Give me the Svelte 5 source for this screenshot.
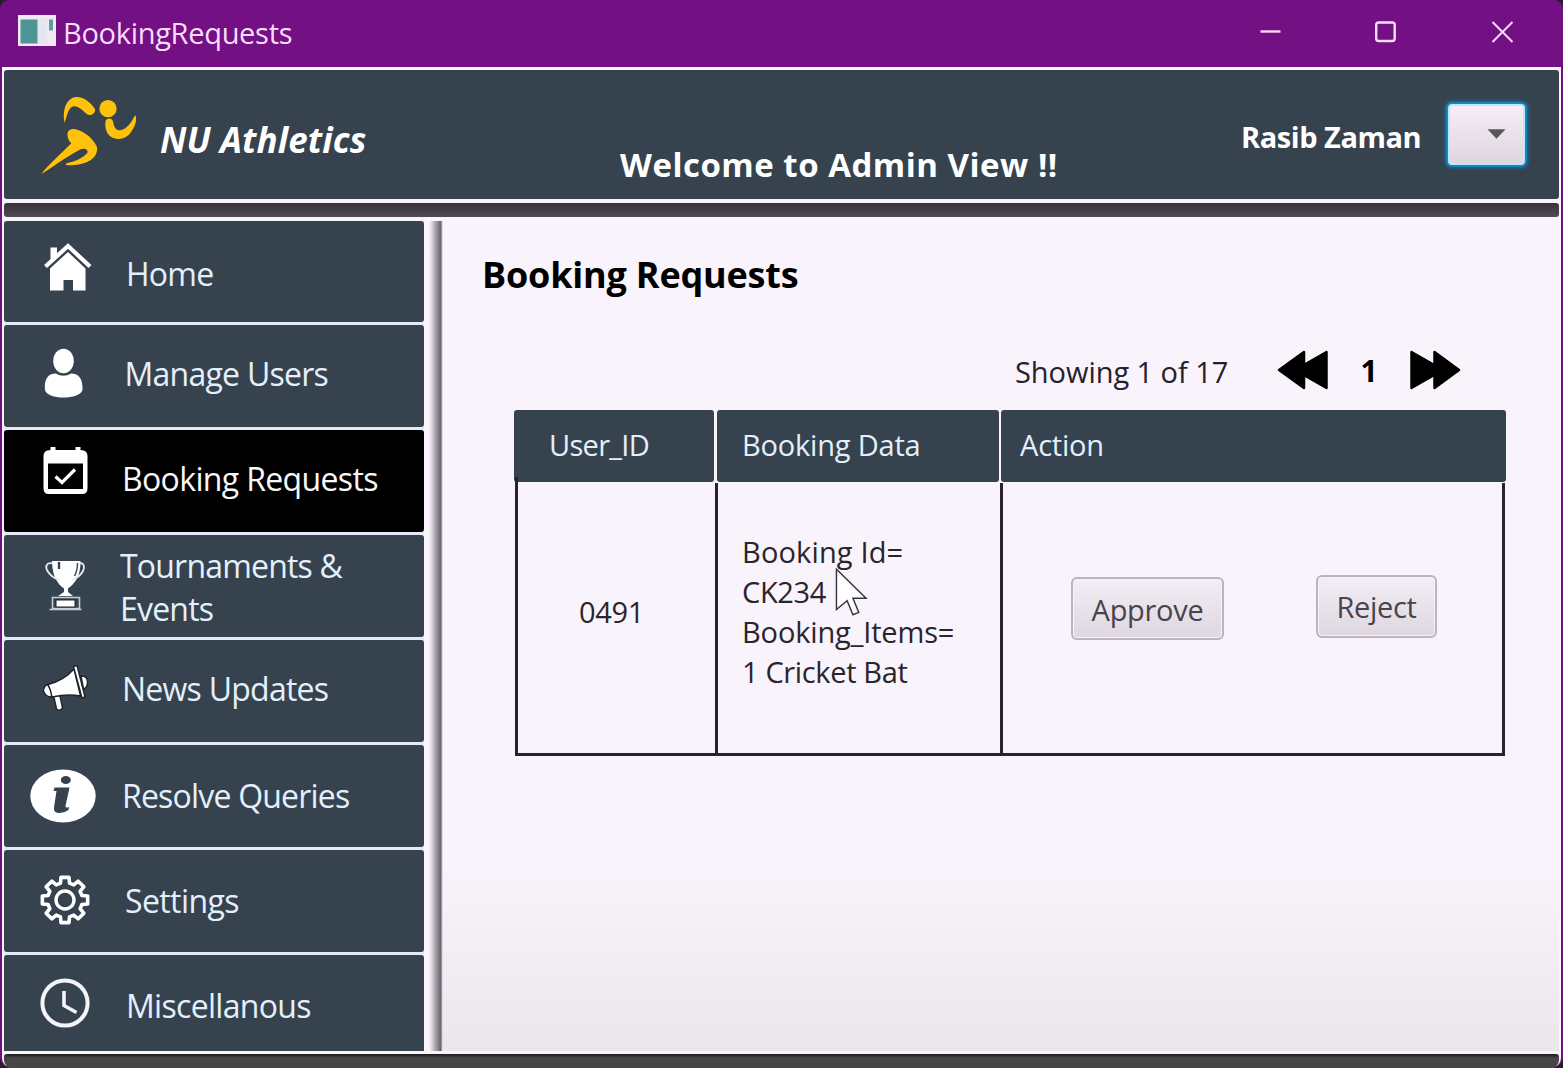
<script>
  const items = [
    { id: 'home', label: 'Home' },
    { id: 'users', label: 'Manage Users' },
    { id: 'booking', label: 'Booking Requests', active: true },
    { id: 'events', label: 'Tournaments & Events' },
    { id: 'news', label: 'News Updates' },
    { id: 'queries', label: 'Resolve Queries' },
    { id: 'settings', label: 'Settings' },
    { id: 'misc', label: 'Miscellanous' }
  ];
  const teeth = [0, 45, 90, 135, 180, 225, 270, 315];
  const rad = (d) => (d * Math.PI) / 180;
  const pt = (r, d) => `${(61 + r * Math.sin(rad(d))).toFixed(2)} ${(50 - r * Math.cos(rad(d))).toFixed(2)}`;
  // Gear outline: one tooth every 45 degrees
  const gear =
    'M' + teeth.map((a) => `${pt(17.5, a - 15)} L${pt(23, a - 10)} L${pt(23, a + 10)} L${pt(17.5, a + 15)}`).join(' L') + 'Z';
</script>

<div class="desktop">
  <div class="window">
    <header class="titlebar">
      <svg class="appicon" viewBox="0 0 38 31">
        <rect width="38" height="31" fill="#f1eaf4" />
        <rect x="2.500" y="4.500" width="17" height="24" fill="#4f9496" />
        <rect x="20" y="4" width="9" height="25" fill="#e6e6ee" />
        <rect x="31" y="4.500" width="4" height="11" fill="#5f9ba0" />
      </svg>
      <span class="title">BookingRequests</span>
      <svg class="controls" viewBox="0 0 300 67" fill="none" stroke="#fbdcff" stroke-width="2.400">
        <path d="M-0.500 31.500h20" />
        <rect x="115.200" y="22.500" width="18.500" height="18.500" rx="2.500" />
        <path d="M231.500 22l20 20M251.500 22l-20 20" stroke-width="2" />
      </svg>
    </header>

    <main class="app">
      <section class="banner">
        <svg class="logo" viewBox="0 210 450 390" fill="#ffc20c">
          <circle cx="324" cy="326" r="26" />
          <path d="M194 368C186 330 199 296 226 291C250 288 274 309 285 327C287 341 274 349 261 343C246 330 235 317 220 319C204 325 202 345 194 368Z" />
          <path d="M316 368C317 351 338 352 340 368C342 384 350 391 361 391C381 388 395 366 405 346C412 352 409 380 387 404C370 419 342 422 327 406C318 394 315 382 316 368Z" />
          <path d="M203 408C199 390 216 383 232 389C258 397 281 418 291 441C294 463 280 478 260 487C240 495 217 497 197 495L199 490C224 485 249 474 262 459C266 448 253 443 242 448C212 463 164 497 123 523C148 492 187 457 214 430C207 424 204 417 203 408Z" />
        </svg>
        <span class="brand">NU Athletics</span>
        <span class="welcome">Welcome to Admin View !!</span>
        <span class="user">Rasib Zaman</span>
        <button class="combo" aria-label="Account menu">
          <svg viewBox="0 0 20 12"><path d="M0.500 1h19l-9.500 10z" fill="#5b555d" /></svg>
        </button>
      </section>
      <div class="rule"></div>

      <div class="body">
        <nav>
          {#each items as item}
            <a class="item {item.id}" class:active={item.active}>
              <svg class="icon" viewBox="0 0 110 102" fill="#fff">
                {#if item.id === 'home'}
                  <path d="M46.500 39V26.500h6.500v6z" />
                  <path d="M41.500 45.500L64 25l22 20.500" fill="none" stroke="#fff" stroke-width="4.200" />
                  <path d="M46 47.500L64 31l17.500 16.500V69.500H69V59H59.500V69.500H46z" />
                {:else if item.id === 'users'}
                  <ellipse cx="59.500" cy="36" rx="10.300" ry="12.200" />
                  <path d="M41 65C40 54 44 48.500 52 48.500C57 51.500 62 51.500 67 48.500C75 48.500 79 54 78.500 65C76 75 43 75 41 65Z" />
                {:else if item.id === 'booking'}
                  <path fill-rule="evenodd" d="M46.500 20V17h5v3h20V17h5v3q7 0 7 6v32q0 6-5 6H44.500q-5 0-5-6V26q0-6 7-6zM44 33.500V59H79V33.500z" />
                  <path d="M51.500 46.500l6.500 6L71 39.500" fill="none" stroke="#fff" stroke-width="3.200" />
                {:else if item.id === 'events'}
                  <path d="M48 26H76.500C76.500 42 71 48 64 53.500V57L69 61H54L60 57V53.500C53 48 48.500 42 48 26z" />
                  <path d="M49 28.500C42 27 41 32 43.500 36Q47 42 55 45M75.500 28.500C80 27 81 32 79 36Q76 42 68 45" fill="none" stroke="#e5e9f1" stroke-width="1.800" />
                  <path d="M55 27v7" stroke="#36434f" stroke-width="2.400" />
                  <path d="M73.500 28q0 8-3 13" stroke="#36434f" stroke-width="1.400" fill="none" />
                  <path d="M48.500 62.500h27v11h-27zM45.500 74.500h32" fill="none" stroke="#c7ced8" stroke-width="1.600" />
                  <rect x="52" y="65" width="19" height="7" stroke="#20252c" stroke-width="1" />
                {:else if item.id === 'news'}
                  <g stroke="#1f252c" stroke-width="1.400">
                    <path d="M49.500 55l6.500 1 2.500 12q-3 4-6 1z" />
                    <path d="M77 36q6.500 0 6.500 6t-4 7z" />
                    <path d="M44 44.500C54 42 63 37 70 29L76.500 56C66 54 57 55 48 57z" />
                    <path d="M43.500 44.500q4 6 4 12.500q-6 0-8-6q0-5 4-6.500z" />
                    <path d="M69.500 26.500l3.500-1 8 31.500-3 1z" />
                  </g>
                {:else if item.id === 'queries'}
                  <ellipse cx="59" cy="51" rx="32.700" ry="26.500" />
                  <ellipse cx="61.800" cy="35" rx="5" ry="4" fill="#36434f" />
                  <path d="M50.500 42.500H65.500L61.500 61q0 2.500 3.500 1l-.5 3q-5 3.500-10 3t-4.500-5.500L52.500 46h-3z" fill="#36434f" />
                {:else if item.id === 'settings'}
                  <path d={gear} fill="none" stroke="#fff" stroke-width="3.600" stroke-linejoin="round" />
                  <circle cx="61" cy="50" r="9" fill="none" stroke="#fff" stroke-width="3.400" />
                {:else}
                  <g fill="none" stroke="#f4f4fb" stroke-width="4">
                    <circle cx="61" cy="48" r="22.600" />
                    <path d="M60 36v14.500l12.500 7" stroke-width="3.600" />
                  </g>
                {/if}
              </svg>
              <span class="label">{item.label}</span>
            </a>
          {/each}
        </nav>
        <div class="divider"></div>

        <section class="content">
          <h1>Booking Requests</h1>
          <div class="pager">
            <span class="showing">Showing 1 of 17</span>
            <svg viewBox="0 0 51 40"><path d="M2 20L27 2v36zM18 20L49.500 2v36z" stroke="#000" stroke-width="2.500" stroke-linejoin="round" /></svg>
            <b>1</b>
            <svg viewBox="0 0 51 40"><path d="M49 20L24.500 2v36zM33 20L1.500 2v36z" stroke="#000" stroke-width="2.500" stroke-linejoin="round" /></svg>
          </div>
          <div class="table">
            <div class="head h1c">User_ID</div>
            <div class="head h2c">Booking Data</div>
            <div class="head h3c">Action</div>
            <div class="cell uid">0491</div>
            <div class="cell data">
              <span class="wide">Booking Id=</span>
              <span>CK234</span>
              <span class="items">Booking_Items=</span>
              <span>1 Cricket Bat</span>
              <svg class="cursor" viewBox="0 0 34 50"><path d="M1.500 2V43.500L12.500 34.500L18.500 49L24.500 46.500L18.500 32H32z" fill="#fff" stroke="#3a353c" stroke-width="1.500" /></svg>
            </div>
            <div class="cell actions">
              <button class="approve">Approve</button>
              <button class="reject">Reject</button>
            </div>
          </div>
        </section>
      </div>
      <footer></footer>
    </main>
  </div>
</div>

<style>
  :global(body) { background: #24152b; }
  .desktop, .desktop * { box-sizing: border-box; }
  .desktop {
    width: 1563px; height: 1068px; overflow: hidden;
    font-family: 'Open Sans', 'Noto Sans', sans-serif;
    background: #2a1a30; white-space: nowrap;
  }
  .window {
    height: 1068px; display: flex; flex-direction: column;
    background: #731083; border-radius: 9px 9px 12px 12px; overflow: hidden;
    padding: 0 2px 0 2px;
  }
  .titlebar { height: 67px; flex: none; display: flex; align-items: flex-start; color: #fbdcff; }
  .appicon { width: 38px; height: 31px; margin: 15px 0 0 16px; }
  .title { font-size: 29px; line-height: 40px; margin: 13px 0 0 7px; letter-spacing: -0.3px; }
  .controls { width: 300px; height: 67px; margin-left: auto; overflow: visible; }

  .app { height: 1001px; background: #f9f3fb; padding: 3px 2px 0; display: flex; flex-direction: column; border-radius: 0 0 10px 10px; }
  .banner {
    height: 129px; flex: none; background: #36434f; border-radius: 3px;
    display: flex; align-items: flex-start; color: #fff; font-weight: 700;
  }
  .logo { width: 150px; height: 130px; margin-left: -4px; flex: none; }
  .brand { font-style: italic; font-size: 35px; line-height: 46px; margin: 47px 0 0 10px; width: 210px; letter-spacing: 0.1px; }
  .welcome { font-size: 33px; line-height: 44px; margin: 73px 0 0 250px; width: 445px; letter-spacing: 0.5px; }
  .user { font-size: 29px; line-height: 40px; margin: 47px 0 0 176px; width: 180px; letter-spacing: -0.45px; }
  .combo {
    width: 77px; height: 61px; margin: 34px 0 0 27px; padding: 0; border: 2px solid #bfe6fb; border-radius: 4px;
    background: linear-gradient(#f6edf6, #ded7e0); box-shadow: 0 0 0 2px #0e87c2, 0 0 4px 2px #0e87c2;
    display: flex; align-items: flex-start;
  }
  .combo svg { width: 19px; height: 12px; margin: 22px 0 0 37px; }
  .rule { height: 14px; flex: none; margin: 4px 0; background: linear-gradient(#38343b, #504a52); border-radius: 3px; }

  .body { height: 830px; flex: none; display: flex; align-items: stretch; overflow: hidden; }
  nav { width: 420px; display: flex; flex-direction: column; gap: 3px; background: #e6eaf6; flex: none; }
  .item {
    height: 102px; flex: none; background: #36434f; border-radius: 3px; display: flex; align-items: flex-start;
    font-size: 32px; line-height: 43px; color: #e3f0fc;
  }
  .item.home { height: 101px; }
  .item.active { background: #000; color: #f8f8f8; }
  .icon { width: 110px; height: 102px; flex: none; }
  .label { margin: 27px 0 0 8px; letter-spacing: -0.75px; }
  .home .label { margin: 31px 0 0 12px; }
  .users .label { margin-left: 10.500px; }
  .booking .label { letter-spacing: -0.65px; }
  .events .label { margin: 9px 0 0 6px; width: 260px; white-space: normal; letter-spacing: -0.8px; }
  .queries .label { margin-top: 29px; letter-spacing: -0.8px; }
  .settings .label { margin: 29px 0 0 11px; letter-spacing: -0.6px; }
  .misc .label { margin: 29px 0 0 12px; letter-spacing: -0.7px; }
  .divider { width: 19px; flex: none; background: linear-gradient(90deg, #fbf5fd 0 5px, #d9d1db 8px, #a39ba4 12px, #6a636b 17px, #c9c1cb 18px, #fbf5fd); }

  .content { flex: 1; padding-left: 39px; background: linear-gradient(#f9f3fb 0 650px, #ebe6ec 830px); }
  h1 { font-size: 36px; line-height: 50px; margin: 29px 0 0; color: #000; font-weight: 700; letter-spacing: -0.2px; }
  .pager { display: flex; align-items: center; height: 42px; margin: 49px 0 0 533px; }
  .pager svg { width: 51px; height: 40px; }
  .showing { font-size: 29px; line-height: 40px; width: 262px; color: #26202a; letter-spacing: -0.05px; padding-top: 3px; }
  .pager b { font-size: 30px; line-height: 40px; width: 82px; text-align: center; color: #000; padding-top: 2px; }
  .table { display: grid; grid-template-columns: 203px 284px 505px; grid-template-rows: 73px 273px; width: 992px; margin: 19px 0 0 32px; }
  .head {
    height: 72px; background: #36434f; border-radius: 3px; color: #e3f0fc; font-size: 29px; line-height: 40px;
    padding-top: 15px; letter-spacing: -0.2px;
  }
  .h1c { margin-right: 3px; padding-left: 35px; letter-spacing: -0.7px; }
  .h2c { margin-right: 2px; padding-left: 25px; }
  .h3c { padding-left: 19px; }
  .cell { border-left: 3px solid #2a222d; border-bottom: 3px solid #2a222d; font-size: 29px; line-height: 40px; color: #2a242d; letter-spacing: -0.35px; }
  .uid { margin-top: -6px; margin-left: 1px; padding: 115px 0 0 61px; }
  .data { margin-left: -2px; padding: 49px 0 0 24px; display: flex; flex-direction: column; position: relative; }
  .data .wide { letter-spacing: 0.15px; }
  .data .items { letter-spacing: -0.15px; }
  .cursor { position: absolute; left: 117px; top: 84px; width: 33px; height: 49px; }
  .actions { border-right: 3px solid #2a222d; display: flex; align-items: flex-start; margin-right: 1px; margin-left: -1px; }
  .actions button {
    font-family: inherit; font-size: 29px; line-height: 40px; color: #48434c; padding: 0; border: 2px solid #bbb3bd;
    border-radius: 6px; background: linear-gradient(#f3edf5, #ded7e0); box-shadow: inset 0 0 0 1px #f8f2fa; letter-spacing: -0.3px;
  }
  .actions .approve { width: 153px; height: 63px; margin: 94px 0 0 68px; padding-top: 2px; }
  .actions .reject { width: 121px; height: 63px; margin: 92px 0 0 92px; }
  footer { height: 15px; flex: none; margin-top: 3px; background: linear-gradient(#1b1a1c, #474547 4px); border-radius: 3px 3px 9px 9px; }
</style>
